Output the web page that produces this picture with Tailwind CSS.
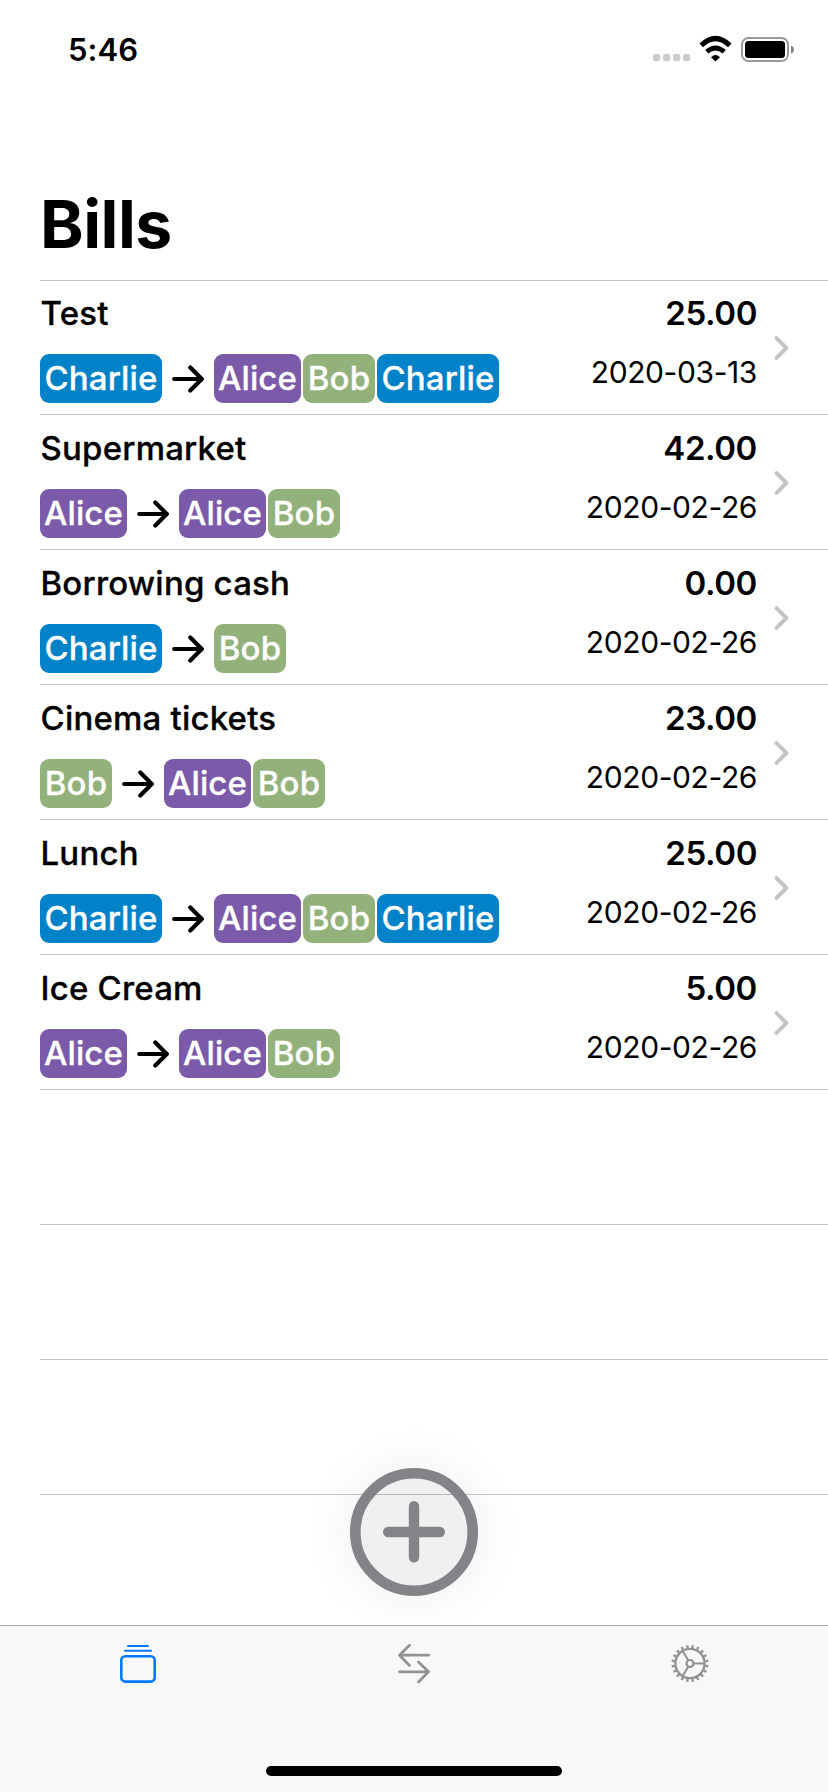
<!DOCTYPE html>
<html lang="en">
<head>
<meta charset="utf-8">
<title>Bills</title>
<script src="https://cdn.jsdelivr.net/npm/@tailwindcss/browser@4"></script>
</head>
<body class="bg-white">
<div class="relative flex h-[1792px] w-[828px] flex-col overflow-hidden bg-white font-['Inter',sans-serif] text-black">
  <header class="flex h-[88px] shrink-0 items-start justify-between pl-[68px] pr-[33px]">
    <div class="mt-[30px] text-[31px] leading-[40px] font-semibold tracking-[0.1px]"><span>5:46</span></div>
    <svg class="mt-[34px]" width="143" height="32" viewBox="652 34 143 32">
      <g fill="#cbcbcb"><rect x="653" y="54" width="7.3" height="7.3" rx="2.4"/><rect x="663" y="54" width="7.3" height="7.3" rx="2.4"/><rect x="673" y="54" width="7.3" height="7.3" rx="2.4"/><rect x="683" y="54" width="7.3" height="7.3" rx="2.4"/></g>
      <path d="M701.2 45.4Q715.5 31.6 729.8 45.4" fill="none" stroke="#000" stroke-width="5"/>
      <path d="M706.8 51.8Q715.5 44 724.2 51.8" fill="none" stroke="#000" stroke-width="4.8"/>
      <path d="M711 57.2Q715.5 52.8 720 57.2L715.5 61.5Z"/>
      <rect x="742" y="38" width="46" height="23" rx="6.5" fill="none" stroke="#999" stroke-width="2"/>
      <rect x="745" y="41" width="40" height="17" rx="3.5"/>
      <path d="M791 45.5Q794 46.5 794 49.5T791 53.5Z" fill="#888"/>
    </svg>
  </header>
  <h1 class="h-[192px] shrink-0 pt-[96px] pl-10 text-[66px] leading-[80px] font-bold tracking-[-0.5px]"><span>Bills</span></h1>
  <main id="list" class="h-[1345px] shrink-0 overflow-hidden pl-10"></main>
  <footer class="flex h-[167px] shrink-0 flex-col border-t border-[#acacac] bg-[#f8f8f8]">
    <nav class="-mt-px grid h-[84px] grid-cols-3">
      <svg class="h-20 w-[80px] justify-self-center" viewBox="98 1625 80 80" fill="none" stroke="#007aff" stroke-linecap="round">
        <path d="M128 1646H148M125 1650.8H151" stroke-width="2"/><rect x="121.3" y="1656.2" width="33.4" height="25.4" rx="4" stroke-width="2.6"/>
      </svg>
      <svg class="h-20 w-[80px] justify-self-center" viewBox="374 1625 80 80" fill="none" stroke="#929292" stroke-width="2.7" stroke-linecap="round" stroke-linejoin="round">
        <path d="M409.5 1645.3L399.5 1655.2L409.5 1665.5M399.5 1655.2H428.7M418.5 1662L428.5 1671.8L418.5 1682M399.5 1671.8H428.5"/>
      </svg>
      <svg class="h-20 w-[80px] justify-self-center" viewBox="650 1625 80 80" fill="none" stroke="#929292">
        <circle cx="690" cy="1663.5" r="14.6" stroke-width="2.3"/>
        <circle cx="690" cy="1663.5" r="3.5" stroke-width="2.2"/>
        <path d="M694 1663.5H704M688 1660L682.7 1651M688 1667L682.7 1676" stroke-width="2.1"/>
        <circle cx="690" cy="1663.5" r="16.9" stroke-width="3.2" pathLength="180" stroke-dasharray="4 5" stroke-dashoffset="6.5"/>
      </svg>
    </nav>
    <div class="mt-[57px] h-[10px] w-[296px] self-center rounded-full bg-black"></div>
  </footer>
  <button class="absolute top-[1468px] left-[350px] h-32 w-32 rounded-full bg-black/6 shadow-[0_0_50px_5px_rgba(0,0,0,0.06)]" aria-label="Add bill">
    <svg width="128" height="128" viewBox="0 0 128 128" fill="none" stroke="#7c7b80" stroke-opacity=".94" stroke-linecap="round">
      <circle cx="64" cy="64" r="58.7" stroke-width="10.6"/><path d="M38.2 64H89.8M64 38.2V89.2" stroke-width="10.4"/>
    </svg>
  </button>
</div>
<script>
const tags = {
  Charlie: '<span class="flex h-[49px] w-[122px] items-center justify-center rounded-[9px] bg-[#0082c9] pb-[2px] tracking-[0.15px] text-white"><span>Charlie</span></span>',
  Alice: '<span class="flex h-[49px] w-[87px] items-center justify-center rounded-[9px] bg-[#7c5aaa] pb-[2px] tracking-[0.15px] text-white"><span>Alice</span></span>',
  Bob: '<span class="flex h-[49px] w-[72px] items-center justify-center rounded-[9px] bg-[#93b27b] pb-[2px] tracking-[0.15px] text-white"><span>Bob</span></span>'
};
const arrow = '<svg class="mx-[10px] shrink-0" width="32" height="28" viewBox="0 0 32 28" fill="none" stroke="#000" stroke-width="4.2" stroke-linecap="round" stroke-linejoin="round"><path d="M2.2 14H29M18.3 2.6L29.8 14L18.3 25.4"/></svg>';
const bills = [
  ['Test', '25.00', '2020-03-13', 'Charlie', ['Alice', 'Bob', 'Charlie']],
  ['Supermarket', '42.00', '2020-02-26', 'Alice', ['Alice', 'Bob']],
  ['Borrowing cash', '0.00', '2020-02-26', 'Charlie', ['Bob']],
  ['Cinema tickets', '23.00', '2020-02-26', 'Bob', ['Alice', 'Bob']],
  ['Lunch', '25.00', '2020-02-26', 'Charlie', ['Alice', 'Bob', 'Charlie']],
  ['Ice Cream', '5.00', '2020-02-26', 'Alice', ['Alice', 'Bob']]
];
const empty = '<div class="h-[135px] border-b border-[#c6c6c8]"></div>';
document.getElementById('list').innerHTML = '<div class="-mb-px h-px bg-[#c6c6c8]"></div>' + bills.map(([name, sum, date, from, to]) => `
  <article class="flex h-[135px] border-b border-[#c6c6c8]">
    <div class="flex flex-1 flex-col text-[33px] leading-[40px] font-medium [-webkit-text-stroke:0.3px]">
      <h2 class="mt-[13px] h-[61px] pl-[0.5px] tracking-[0.2px]"><span>${name}</span></h2>
      <div class="flex items-center">${tags[from]}${arrow}<div class="flex gap-[2px]">${to.map(t => tags[t]).join('')}</div></div>
    </div>
    <div class="flex flex-col items-end">
      <div class="mt-[13px] h-[59px] text-[33px] leading-[40px] font-semibold tracking-[-0.4px]"><span>${sum}</span></div>
      <div class="text-[30px] leading-[40px] tracking-[-0.4px]"><span>${date}</span></div>
    </div>
    <svg class="mt-[55px] mr-[38px] ml-[16px] shrink-0" width="17" height="26" viewBox="0 0 17 26" fill="none" stroke="#c4c4c6" stroke-width="4" stroke-linecap="round" stroke-linejoin="round"><path d="M3.5 3.2L13.4 13L3.5 22.8"/></svg>
  </article>`).join('') + empty + empty + empty;
</script>
</body>
</html>
